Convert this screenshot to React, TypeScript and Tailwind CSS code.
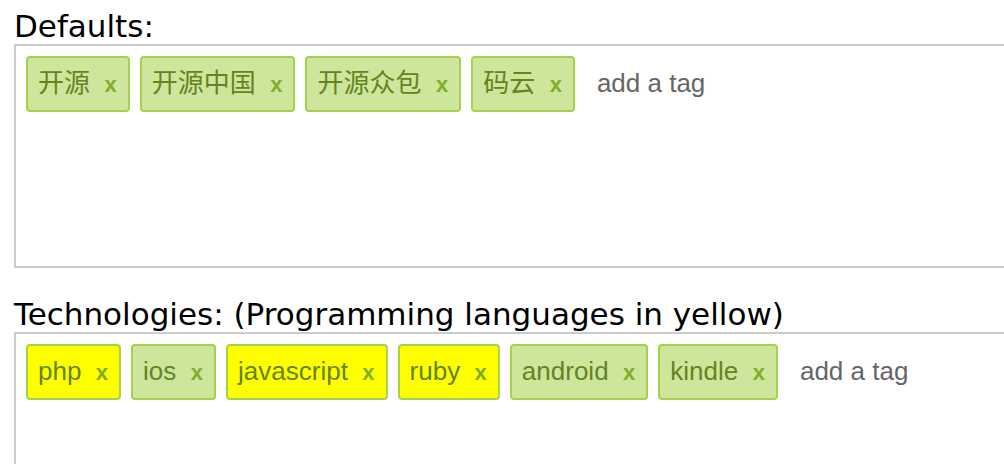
const defaults = ["开源", "开源中国", "开源众包", "码云"];

const technologies = [
  { name: "php", lang: true },
  { name: "ios", lang: false },
  { name: "javascript", lang: true },
  { name: "ruby", lang: true },
  { name: "android", lang: false },
  { name: "kindle", lang: false },
];

function Tag({ text, yellow = false }: { text: string; yellow?: boolean }) {
  return (
    <span
      className={
        yellow
          ? "mr-[10px] mb-[10px] block rounded-[4px] border-2 border-[#a5d24a] bg-[#ffff00] py-[10px] pr-[11px] pl-[10px] text-[26px] leading-[30px] text-[#638421]"
          : "mr-[10px] mb-[10px] block rounded-[4px] border-2 border-[#a5d24a] bg-[#cde69c] py-[10px] pr-[11px] pl-[10px] text-[26px] leading-[30px] text-[#638421]"
      }
    >
      <span>{text}&nbsp;&nbsp;</span>
      <a href="#" className="text-[22px] font-bold text-[#82ad2b] no-underline">
        x
      </a>
    </span>
  );
}

function TagBox({ children }: { children: React.ReactNode }) {
  return (
    <div className="flex h-[224px] w-[1010px] flex-wrap content-start items-start border-2 border-[#cccccc] bg-white p-[10px] font-['Liberation_Sans','Noto_Sans_CJK_SC',sans-serif]">
      {children}
      <span className="block border-2 border-transparent p-[10px] text-[26px] leading-[30px] text-[#666666]">
        add a tag
      </span>
    </div>
  );
}

export default function App() {
  return (
    <div className="h-[464px] w-[1004px] overflow-hidden bg-white pl-[14px] font-['DejaVu_Sans',sans-serif] text-black">
      <label className="block h-[44px] pt-2 text-[31px] leading-[36px]">Defaults:</label>
      <TagBox>
        {defaults.map((t) => (
          <Tag key={t} text={t} />
        ))}
      </TagBox>

      <label className="mt-[20px] block h-[44px] pt-2 text-[31px] leading-[36px]">
        Technologies: (Programming languages in yellow)
      </label>
      <TagBox>
        {technologies.map((t) => (
          <Tag key={t.name} text={t.name} yellow={t.lang} />
        ))}
      </TagBox>
    </div>
  );
}
